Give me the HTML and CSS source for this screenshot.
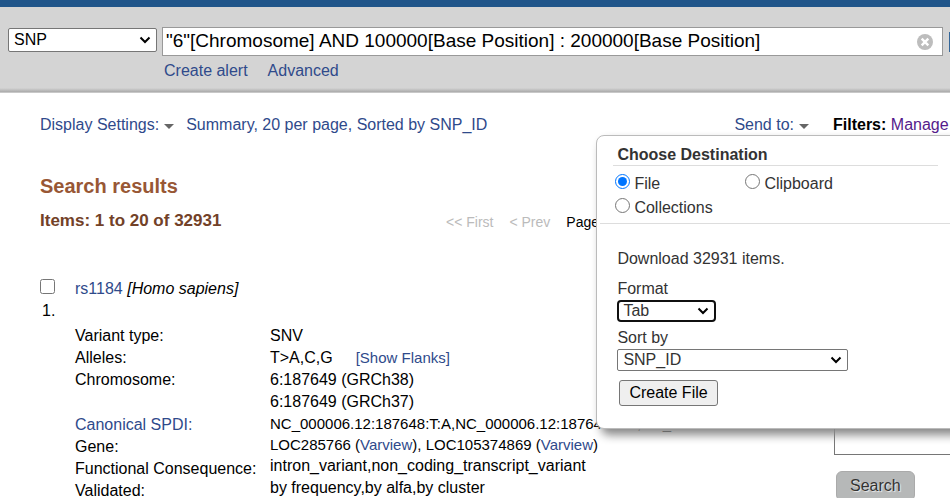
FILE: index.html
```
<!DOCTYPE html>
<html lang="en">
<head>
    <meta charset="UTF-8">
    <meta name="viewport" content="width=device-width, initial-scale=1.0">
    <title>SNP search results</title>
    <link rel="stylesheet" href="styles.css">
</head>
<body>
    <header class="search-header">
        <form class="search-form">
            <select class="database" aria-label="Database">
                <option>SNP</option>
            </select>
            <div class="search-field">
                <div class="term-box">
                    <input class="term" type="text" aria-label="Search term" value='"6"[Chromosome] AND 100000[Base Position] : 200000[Base Position]'>
                    <button class="clear" type="reset" aria-label="Clear">
                        <svg width="18" height="18" viewBox="0 0 18 18">
                            <circle cx="9" cy="9" r="8" fill="#bdbdbd"/>
                            <path d="M5.7 5.7l6.6 6.6M12.3 5.7l-6.6 6.6" stroke="#fff" stroke-width="2.4"/>
                        </svg>
                    </button>
                </div>
                <nav class="search-links">
                    <a href="#">Create alert</a>
                    <a href="#">Advanced</a>
                </nav>
            </div>
            <button class="go" type="button" aria-label="Search"></button>
        </form>
    </header>

    <div class="page">
        <main class="content">
            <div class="toolbar">
                <a class="menu-link" href="#">Display Settings:</a>
                <a href="#">Summary, 20 per page, Sorted by SNP_ID</a>
                <div class="send-to">
                    <a class="menu-link" href="#">Send to:</a>
                    <form class="send-menu">
                        <fieldset class="destinations">
                            <legend>Choose Destination</legend>
                            <div class="choices">
                                <label><input type="radio" name="dest" checked>File</label>
                                <label><input type="radio" name="dest">Clipboard</label>
                                <label><input type="radio" name="dest">Collections</label>
                            </div>
                        </fieldset>
                        <div class="file-options">
                            <p>Download 32931 items.</p>
                            <label for="format">Format</label>
                            <select id="format" class="format">
                                <option>Tab</option>
                            </select>
                            <label for="sort">Sort by</label>
                            <select id="sort" class="sort">
                                <option>SNP_ID</option>
                            </select>
                            <button class="create-file" type="button">Create File</button>
                        </div>
                    </form>
                </div>
            </div>

            <h1>Search results</h1>
            <div class="results-bar">
                <h2>Items: 1 to 20 of 32931</h2>
                <div class="pager">
                    <span class="inactive">&lt;&lt; First</span>
                    <span class="inactive">&lt; Prev</span>
                    <label for="pageno">Page</label>
                    <input id="pageno" type="text" value="1">
                </div>
            </div>

            <article class="result">
                <div class="result-num">
                    <input type="checkbox" id="rs1184">
                    <label for="rs1184">1.</label>
                </div>
                <div class="result-body">
                    <p class="result-title"><a href="#">rs1184</a> <em>[Homo sapiens]</em></p>
                    <div class="details">
                        <ul class="names">
                            <li>Variant type:</li>
                            <li>Alleles:</li>
                            <li class="two-lines">Chromosome:</li>
                            <li><a href="#">Canonical SPDI:</a></li>
                            <li>Gene:</li>
                            <li>Functional Consequence:</li>
                            <li>Validated:</li>
                        </ul>
                        <ul class="values">
                            <li>SNV</li>
                            <li>T&gt;A,C,G<a class="flanks" href="#">[Show Flanks]</a></li>
                            <li>6:187649 (GRCh38)</li>
                            <li>6:187649 (GRCh37)</li>
                            <li class="small">NC_000006.12:187648:T:A,NC_000006.12:187648:T:C,NC_000006.12</li>
                            <li class="small">LOC285766 (<a href="#">Varview</a>), LOC105374869 (<a href="#">Varview</a>)</li>
                            <li>intron_variant,non_coding_transcript_variant</li>
                            <li>by frequency,by alfa,by cluster</li>
                        </ul>
                    </div>
                </div>
            </article>
        </main>

        <aside class="sidebar">
            <p class="filters"><b>Filters:</b> <a href="#">Manage Filters</a></p>
            <textarea class="details-box" aria-label="Search details"></textarea>
            <button class="details-search" type="button">Search</button>
        </aside>
    </div>
</body>
</html>
```
FILE: styles.css
```
* {
    box-sizing: border-box;
}
body {
    margin: 0;
    height: 100vh;
    overflow: hidden;
    background: #fff;
    color: #000;
    font: 16px/22px "Liberation Sans", Arial, sans-serif;
}
a {
    color: #2f4a8b;
    text-decoration: none;
}
h1, h2, p, ul {
    margin: 0;
    padding: 0;
    list-style: none;
}
select, input, button, textarea {
    font: inherit;
    margin: 0;
}
select {
    appearance: none;
    padding: 0 24px 0 5px;
    background: #fff url("data:image/svg+xml,%3Csvg xmlns='http://www.w3.org/2000/svg' width='12' height='8'%3E%3Cpath d='M1.5 1.5L6 6l4.5-4.5' fill='none' stroke='%23000' stroke-width='2'/%3E%3C/svg%3E") no-repeat right 5px center;
    color: #000;
    border: 1px solid #767676;
    border-radius: 2px;
}

/* search header */
.search-header {
    height: 93px;
    padding: 20px 1px 0 8px;
    background: linear-gradient(to top, #aaa, #d4d4d4 4px);
    border-top: 7px solid #20558a;
    border-bottom: 1px solid #c8c8c8;
}
.search-form {
    display: flex;
    align-items: flex-start;
}
.database {
    width: 149px;
    height: 24px;
    margin: 1px 5px 0 0;
}
.search-field {
    flex: 1;
}
.term-box {
    display: flex;
    align-items: center;
    height: 29px;
    padding: 0 8px 0 3px;
    background: #fff;
    border: 1px solid #999;
}
.term {
    flex: 1;
    min-width: 0;
    padding: 0 0 1px;
    border: 0;
    outline: 0;
    background: none;
    font-size: 19px;
}
.clear {
    display: flex;
    padding: 0;
    border: 0;
    background: none;
}
.search-links {
    display: flex;
    gap: 20px;
    padding: 4px 2px;
}
.go {
    width: 90px;
    height: 20px;
    margin: 5px -90px 0 6px;
    border: 1px solid #336699;
    background: #336699;
}

/* page columns */
.page {
    display: flex;
    gap: 24px;
    padding: 21px 0 0 40px;
}
.content {
    flex: 1;
    min-width: 0;
}
.sidebar {
    flex: 0 0 117px;
    overflow: hidden;
}
.toolbar {
    display: flex;
    gap: 12px;
}
.menu-link::after {
    content: "";
    display: inline-block;
    margin-left: 5px;
    vertical-align: 1px;
    border: 5px solid transparent;
    border-top-color: #666;
    border-bottom: 0;
}

/* send to menu */
.send-to {
    position: relative;
    margin-left: auto;
}
.send-menu {
    position: absolute;
    z-index: 1;
    top: 21px;
    left: -138px;
    width: 365px;
    padding: 8px 0 22px;
    background: #fff;
    color: #333;
    border: 1px solid #bbb;
    border-radius: 8px;
    box-shadow: 5px 6px 10px #888;
}
.destinations {
    margin: 0 0 0 3px;
    padding: 0 0 4px 13px;
    border: 0;
    border-bottom: 1px solid #ddd;
}
.destinations legend {
    width: 325px;
    padding: 0 4px;
    border-bottom: 1px solid #ddd;
    font-weight: bold;
    line-height: 21px;
}
.choices {
    display: grid;
    grid-template-columns: 130px 130px;
    row-gap: 2px;
    padding: 7px 0 0 2px;
}
.choices input {
    width: 15px;
    height: 15px;
    margin: 0 4px 0 0;
    vertical-align: 0;
}
.file-options {
    display: flex;
    flex-direction: column;
    align-items: flex-start;
    padding: 24px 20px 0;
}
.file-options p {
    margin-bottom: 8px;
}
.format, .sort {
    height: 22px;
    color: #333;
}
.format {
    width: 99px;
    margin-bottom: 5px;
    padding-left: 4px;
    border: 2px solid #101010;
    border-radius: 4px;
    line-height: 18px;
}
.sort {
    width: 231px;
    margin-bottom: 9px;
    line-height: 20px;
}
.create-file {
    height: 26px;
    margin-left: 2px;
    padding: 0 9px;
    color: #000;
    background: #efefef;
    border: 1px solid #767676;
    border-radius: 3px;
}

/* results */
h1 {
    margin-top: 38px;
    color: #985735;
    font-size: 20px;
    line-height: 24px;
}
.results-bar {
    display: flex;
    justify-content: space-between;
    margin-top: 12px;
}
h2 {
    color: #724128;
    font-size: 17px;
    line-height: 22px;
}
.pager {
    display: flex;
    align-items: center;
    gap: 16px;
    width: 363px;
    font-size: 14px;
    line-height: 24px;
}
.inactive {
    color: #bbb;
}
.pager input {
    width: 40px;
    height: 20px;
}
.result {
    display: flex;
    margin-top: 44px;
}
.result-num {
    display: flex;
    flex-direction: column;
    width: 35px;
}
.result-num input {
    width: 15px;
    height: 15px;
    margin: 1px 0 6px;
}
.result-num label {
    padding-left: 2px;
}
.details {
    display: flex;
    margin-top: 25px;
}
.names {
    flex: 0 0 195px;
}
.names .two-lines {
    height: 45px;
}
.values {
    white-space: nowrap;
}
.values .small {
    font-size: 15px;
    line-height: 21px;
}
.flanks {
    margin-left: 23px;
    font-size: 15px;
}

/* sidebar */
.filters {
    white-space: nowrap;
}
.filters a {
    color: #551a8b;
}
.details-box {
    display: block;
    width: 180px;
    height: 80px;
    margin: 239px 0 16px 1px;
    border: 1px solid #767676;
    resize: none;
}
.details-search {
    height: 30px;
    margin-left: 3px;
    padding: 0 13px;
    color: #333;
    background: #b6b8b8;
    border: 1px solid #aaa;
    border-radius: 6px;
    text-shadow: 1px 1px 1px #eee;
}
```
